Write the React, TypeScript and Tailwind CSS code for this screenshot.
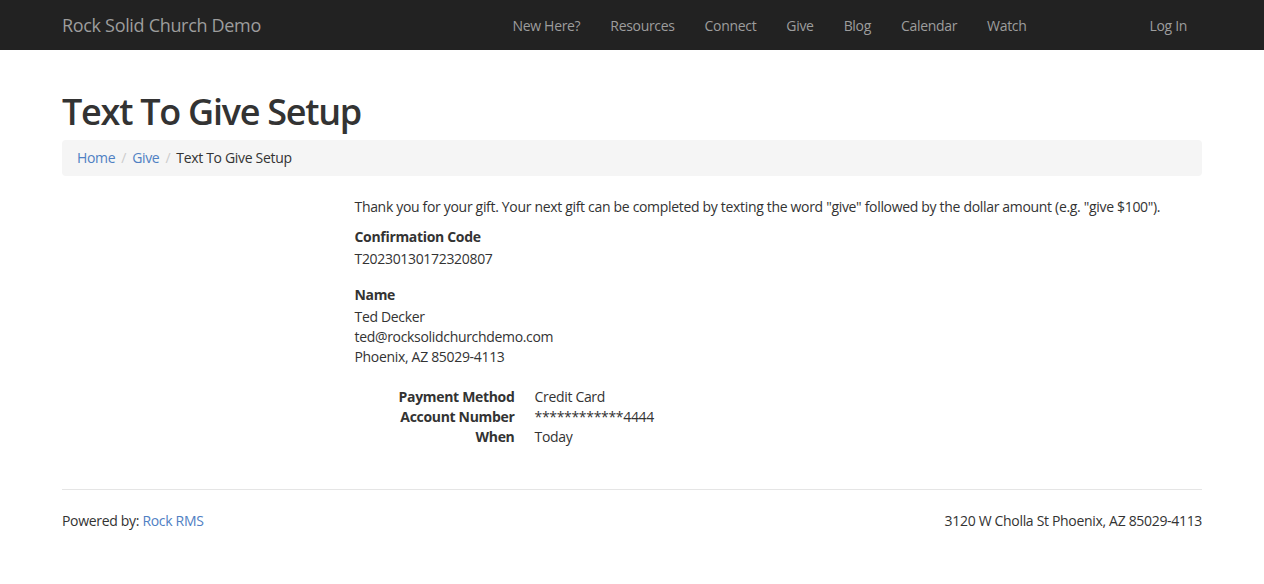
const navLinks = ["New Here?", "Resources", "Connect", "Give", "Blog", "Calendar", "Watch"];

const font = { fontFamily: '"Open Sans", "Noto Sans", sans-serif' };

function Navbar() {
  return (
    <nav className="h-[50px] bg-[#222222]">
      <div className="mx-auto flex h-full w-[1170px] items-center px-[15px] tracking-[-0.02em]">
        <a href="#" className="text-[18px] text-[#9d9d9d]">
          Rock Solid Church Demo
        </a>
        <ul className="ml-auto mr-[93px] flex items-center">
          {navLinks.map((link) => (
            <li key={link}>
              <a href="#" className="block px-[15px] pt-px text-[14px] leading-5 text-[#9d9d9d]">
                {link}
              </a>
            </li>
          ))}
        </ul>
        <a href="#" className="block px-[15px] pt-px text-[14px] leading-5 text-[#9d9d9d]">
          Log In
        </a>
      </div>
    </nav>
  );
}

function Breadcrumb() {
  return (
    <ol className="flex items-center rounded-[4px] bg-[#f5f5f5] px-[15px] py-2 text-[14px] leading-5">
      <li>
        <a href="#" className="text-[#4f80c3]">Home</a>
      </li>
      <li className="flex items-center">
        <span className="px-[6px] text-[#cccccc]">/</span>
        <a href="#" className="text-[#4f80c3]">Give</a>
      </li>
      <li className="flex items-center">
        <span className="px-[6px] text-[#cccccc]">/</span>
        <span className="text-[#333333]">Text To Give Setup</span>
      </li>
    </ol>
  );
}

function Receipt() {
  return (
    <div className="ml-[292.5px] text-[14px] leading-5 text-[#333333]">
      <p className="mb-[10px]">
        Thank you for your gift. Your next gift can be completed by texting the word "give" followed by the dollar
        amount (e.g. "give $100").
      </p>

      <dl className="mb-4">
        <dt className="font-bold">Confirmation Code</dt>
        <dd className="mt-[2px]">T20230130172320807</dd>
      </dl>

      <dl className="mb-5">
        <dt className="font-bold">Name</dt>
        <dd className="mt-[2px]">
          Ted Decker
          <br />
          ted@rocksolidchurchdemo.com
          <br />
          Phoenix, AZ 85029-4113
        </dd>
      </dl>

      <dl className="grid grid-cols-[160px_1fr] gap-x-5">
        <dt className="text-right font-bold">Payment Method</dt>
        <dd>Credit Card</dd>
        <dt className="text-right font-bold">Account Number</dt>
        <dd>************4444</dd>
        <dt className="text-right font-bold">When</dt>
        <dd>Today</dd>
      </dl>
    </div>
  );
}

export default function App() {
  return (
    <div className="min-h-[584px] bg-white text-[#333333] tracking-[-0.02em]" style={font}>
      <Navbar />

      <main className="mx-auto w-[1170px] px-[15px]">
        <h1 className="mt-[42px] mb-[8px] text-[36px] font-semibold leading-[40px] tracking-[-0.035em] text-[#333333]">
          Text To Give Setup
        </h1>
        <Breadcrumb />
        <div className="mt-[21px]">
          <Receipt />
        </div>
      </main>

      <footer className="mx-auto w-[1170px] px-[15px]">
        <hr className="mt-[42px] border-t border-[#e5e5e5]" />
        <div className="flex items-center justify-between pt-[21px] text-[14px] leading-5 text-[#333333]">
          <p>
            Powered by: <a href="#" className="text-[#4f80c3]">Rock RMS</a>
          </p>
          <p>3120 W Cholla St Phoenix, AZ 85029-4113</p>
        </div>
      </footer>
    </div>
  );
}
